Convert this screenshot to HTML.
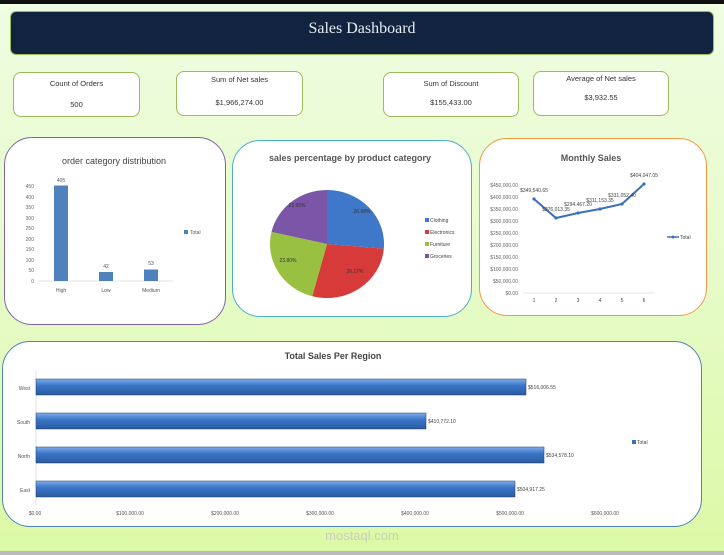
<!DOCTYPE html>
<html><head><meta charset="utf-8"><style>
*{margin:0;padding:0;box-sizing:border-box}
body{width:724px;height:555px;overflow:hidden;position:relative;font-family:"Liberation Sans",sans-serif;background:linear-gradient(#effde2,#e6fbc8 50%,#dcf9a6);}
.card{position:absolute;background:#fff;border:1px solid #9bbb59;border-radius:8px;text-align:center;font-size:7.5px;color:#333}
.box{position:absolute;background:#fff;border-radius:28px}
</style></head><body>
<div style="position:absolute;left:0;top:0;width:724px;height:4px;background:#111"></div>
<div style="position:absolute;left:0;top:551px;width:724px;height:4px;background:#bbb"></div>
<div style="position:absolute;left:10px;top:11px;width:704px;height:44px;background:#12233f;border:1px solid #9bbb59;border-radius:6px;color:#e8ecf2;font-family:'Liberation Serif',serif;font-size:16px;text-align:center;line-height:34px">Sales Dashboard</div>
<div class="card" style="left:13px;top:72px;width:127px;height:45px"><div style="margin-top:6px">Count of Orders</div><div style="margin-top:12px">500</div></div>
<div class="card" style="left:176px;top:71px;width:127px;height:45px"><div style="margin-top:3px">Sum of Net sales</div><div style="margin-top:14px">$1,966,274.00</div></div>
<div class="card" style="left:383px;top:72px;width:136px;height:45px"><div style="margin-top:6px">Sum of Discount</div><div style="margin-top:10px">$155,433.00</div></div>
<div class="card" style="left:533px;top:71px;width:136px;height:45px"><div style="margin-top:2px">Average of Net sales</div><div style="margin-top:10px">$3,932.55</div></div>

<div class="box" style="left:4px;top:137px;width:222px;height:188px;border:1px solid #8064a2"></div>
<div class="box" style="left:232px;top:140px;width:240px;height:177px;border:1px solid #4bacc6"></div>
<div class="box" style="left:479px;top:138px;width:228px;height:178px;border:1px solid #f79646"></div>
<div class="box" style="left:2px;top:341px;width:700px;height:186px;border:1px solid #4f81bd"></div>

<svg width="724" height="555" style="position:absolute;left:0;top:0" font-family="Liberation Sans, sans-serif">
<defs>
<linearGradient id="bg" x1="0" y1="0" x2="0" y2="1"><stop offset="0" stop-color="#7fb0ec"/><stop offset=".4" stop-color="#3b76c8"/><stop offset="1" stop-color="#2a5aa0"/></linearGradient>
</defs>
<text x="114" y="164" font-size="9" text-anchor="middle" fill="#444">order category distribution</text>
<g font-size="5" fill="#666" text-anchor="end">
<text x="34" y="188">450</text><text x="34" y="199">400</text><text x="34" y="209">350</text><text x="34" y="220">300</text><text x="34" y="230">250</text><text x="34" y="241">200</text><text x="34" y="251">150</text><text x="34" y="262">100</text><text x="34" y="272">50</text><text x="34" y="283">0</text>
</g>
<line x1="38" y1="281" x2="173" y2="281" stroke="#ccc" stroke-width=".6"/>
<rect x="54" y="185.5" width="14" height="95.5" fill="#4f81bd"/>
<rect x="99" y="272" width="14" height="9" fill="#4f81bd"/>
<rect x="144" y="269.5" width="14" height="11.5" fill="#4f81bd"/>
<g font-size="5" fill="#555" text-anchor="middle"><text x="61" y="182">405</text><text x="106" y="268">42</text><text x="151" y="265">53</text>
<text x="61" y="292">High</text><text x="106" y="292">Low</text><text x="151" y="292">Medium</text></g>
<rect x="184" y="230" width="4" height="4" fill="#4f81bd"/><text x="190" y="234" font-size="5" fill="#555">Total</text>
<text x="350" y="161" font-size="9" font-weight="bold" text-anchor="middle" fill="#555">sales percentage by product category</text>
<path d="M327,244 L327,190 A57,54 0 0 1 383.8,248.7 Z" fill="#3f78c8"/>
<path d="M327,244 L383.8,248.7 A57,54 0 0 1 312.2,296.2 Z" fill="#d63b3a"/>
<path d="M327,244 L312.2,296.2 A57,54 0 0 1 271.5,231.9 Z" fill="#99c040"/>
<path d="M327,244 L271.5,231.9 A57,54 0 0 1 327,190 Z" fill="#7a55a8"/>
<g font-size="5" fill="#333" text-anchor="middle"><text x="362" y="213">26.08%</text><text x="355" y="273">26.17%</text><text x="288" y="262">23.80%</text><text x="297" y="207">23.95%</text></g>
<g font-size="5" fill="#444"><rect x="425" y="218" width="4" height="4" fill="#3f78c8"/><text x="430" y="222">Clothing</text>
<rect x="425" y="230" width="4" height="4" fill="#d63b3a"/><text x="430" y="234">Electronics</text>
<rect x="425" y="242" width="4" height="4" fill="#99c040"/><text x="430" y="246">Furniture</text>
<rect x="425" y="254" width="4" height="4" fill="#7a55a8"/><text x="430" y="258">Groceries</text></g>
<text x="591" y="161" font-size="9" font-weight="bold" text-anchor="middle" fill="#555">Monthly Sales</text>
<g font-size="5" fill="#666" text-anchor="end">
<text x="518" y="187">$450,000.00</text><text x="518" y="199">$400,000.00</text><text x="518" y="211">$350,000.00</text><text x="518" y="223">$300,000.00</text><text x="518" y="235">$250,000.00</text><text x="518" y="247">$200,000.00</text><text x="518" y="259">$150,000.00</text><text x="518" y="271">$100,000.00</text><text x="518" y="283">$50,000.00</text><text x="518" y="295">$0.00</text>
</g>
<line x1="523" y1="293" x2="655" y2="293" stroke="#ccc" stroke-width=".6"/>
<polyline points="534,199 556,218 578,213 600,209 622,204 644,184" fill="none" stroke="#3a70b8" stroke-width="2"/>
<g fill="#3a70b8"><circle cx="534" cy="199" r="1.6"/><circle cx="556" cy="218" r="1.6"/><circle cx="578" cy="213" r="1.6"/><circle cx="600" cy="209" r="1.6"/><circle cx="622" cy="204" r="1.6"/><circle cx="644" cy="184" r="1.6"/></g>
<g font-size="5" fill="#444" text-anchor="middle"><text x="534" y="192">$349,540.65</text><text x="556" y="211">$276,013.35</text><text x="578" y="206">$294,467.20</text><text x="600" y="202">$311,153.35</text><text x="622" y="197">$331,052.40</text><text x="644" y="177">$404,047.05</text>
<text x="534" y="302">1</text><text x="556" y="302">2</text><text x="578" y="302">3</text><text x="600" y="302">4</text><text x="622" y="302">5</text><text x="644" y="302">6</text></g>
<line x1="667" y1="237" x2="679" y2="237" stroke="#3a70b8" stroke-width="1.5"/><circle cx="673" cy="237" r="1.5" fill="#3a70b8"/><text x="680" y="239" font-size="5" fill="#444">Total</text>
<text x="333" y="359" font-size="9" font-weight="bold" text-anchor="middle" fill="#444">Total Sales Per Region</text>
<line x1="36" y1="370" x2="36" y2="505" stroke="#ccc" stroke-width=".6"/>
<rect x="36" y="379" width="490" height="16" fill="url(#bg)" stroke="#1f3e70" stroke-width=".5"/>
<rect x="36" y="413" width="390" height="16" fill="url(#bg)" stroke="#1f3e70" stroke-width=".5"/>
<rect x="36" y="447" width="508" height="16" fill="url(#bg)" stroke="#1f3e70" stroke-width=".5"/>
<rect x="36" y="481" width="479" height="16" fill="url(#bg)" stroke="#1f3e70" stroke-width=".5"/>
<g font-size="5" fill="#444"><text x="528" y="389">$516,006.55</text><text x="428" y="423">$410,772.10</text><text x="546" y="457">$534,578.10</text><text x="517" y="491">$504,917.25</text>
<text x="637" y="444">Total</text></g>
<rect x="632" y="440" width="4" height="4" fill="#3a70b8"/>
<g font-size="5" fill="#555" text-anchor="end"><text x="30" y="390">West</text><text x="30" y="424">South</text><text x="30" y="458">North</text><text x="30" y="492">East</text></g>
<g font-size="5" fill="#555" text-anchor="middle"><text x="35" y="515">$0.00</text><text x="130" y="515">$100,000.00</text><text x="225" y="515">$200,000.00</text><text x="320" y="515">$300,000.00</text><text x="415" y="515">$400,000.00</text><text x="510" y="515">$500,000.00</text><text x="605" y="515">$600,000.00</text></g>
<text x="362" y="540" font-size="13" fill="#c8cfc0" text-anchor="middle">mostaql.com</text>
</svg>
</body></html>
